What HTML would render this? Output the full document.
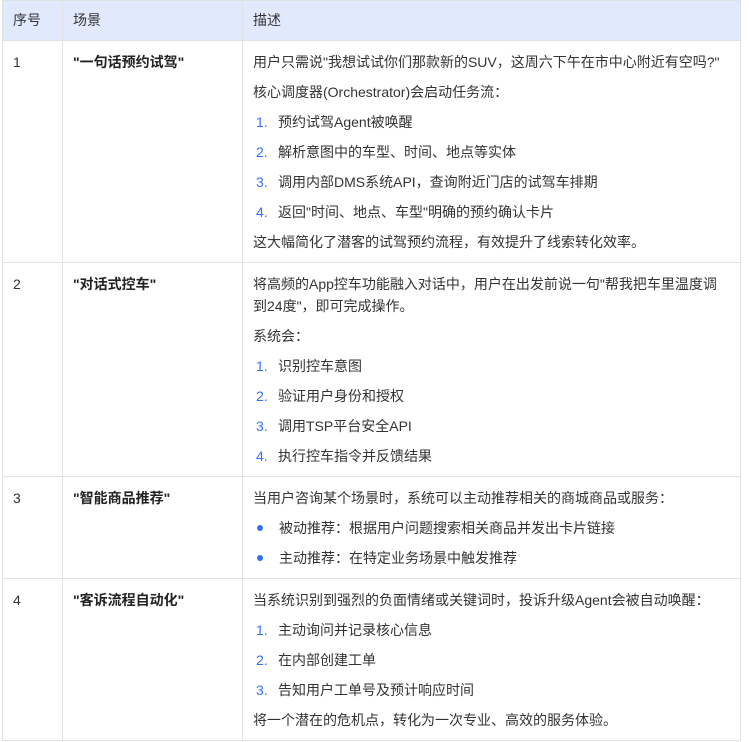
<!DOCTYPE html>
<html><head><meta charset="utf-8"><style>
body{margin:0;background:#fff;font-family:"Liberation Sans","Noto Sans CJK SC",sans-serif;font-size:14px;color:#333;}
table{position:absolute;left:2px;top:0;border-collapse:collapse;width:739px;table-layout:fixed;}
td,th{border:1px solid #dfe1e5;vertical-align:top;padding:11px 6px 10px 10px;line-height:20px;text-align:left;}
th{background:#e1eafc;font-weight:normal;height:20px;padding:9px 10px 10px;line-height:20px;}
p{margin:0 0 10px;white-space:nowrap;height:20px}
p.w{height:auto}
p:last-child{margin:0}
p.w{line-height:22px;margin-top:-1px;margin-bottom:9px}
.n{color:#3370ff;display:inline-block;width:22px;margin-left:3px}
.d{display:inline-block;width:6px;height:6px;border-radius:50%;background:#3370ff;margin:0 16px 0 4px;vertical-align:2px}
b{font-weight:bold;color:#222}
</style></head><body>
<table>
<colgroup><col style="width:60px"><col style="width:180px"><col></colgroup>
<tr><th>序号</th><th>场景</th><th>描述</th></tr>
<tr><td>1</td><td><b>"一句话预约试驾"</b></td><td>
<p>用户只需说"我想试试你们那款新的SUV，这周六下午在市中心附近有空吗?"</p>
<p>核心调度器(Orchestrator)会启动任务流：</p>
<p><span class="n">1.</span>预约试驾Agent被唤醒</p>
<p><span class="n">2.</span>解析意图中的车型、时间、地点等实体</p>
<p><span class="n">3.</span>调用内部DMS系统API，查询附近门店的试驾车排期</p>
<p><span class="n">4.</span>返回"时间、地点、车型"明确的预约确认卡片</p>
<p>这大幅简化了潜客的试驾预约流程，有效提升了线索转化效率。</p>
</td></tr>
<tr><td>2</td><td><b>"对话式控车"</b></td><td>
<p class="w">将高频的App控车功能融入对话中，用户在出发前说一句"帮我把车里温度调<br>到24度"，即可完成操作。</p>
<p>系统会：</p>
<p><span class="n">1.</span>识别控车意图</p>
<p><span class="n">2.</span>验证用户身份和授权</p>
<p><span class="n">3.</span>调用TSP平台安全API</p>
<p><span class="n">4.</span>执行控车指令并反馈结果</p>
</td></tr>
<tr><td>3</td><td><b>"智能商品推荐"</b></td><td>
<p>当用户咨询某个场景时，系统可以主动推荐相关的商城商品或服务：</p>
<p><span class="d"></span>被动推荐：根据用户问题搜索相关商品并发出卡片链接</p>
<p><span class="d"></span>主动推荐：在特定业务场景中触发推荐</p>
</td></tr>
<tr><td>4</td><td><b>"客诉流程自动化"</b></td><td>
<p>当系统识别到强烈的负面情绪或关键词时，投诉升级Agent会被自动唤醒：</p>
<p><span class="n">1.</span>主动询问并记录核心信息</p>
<p><span class="n">2.</span>在内部创建工单</p>
<p><span class="n">3.</span>告知用户工单号及预计响应时间</p>
<p>将一个潜在的危机点，转化为一次专业、高效的服务体验。</p>
</td></tr>
</table>
</body></html>
